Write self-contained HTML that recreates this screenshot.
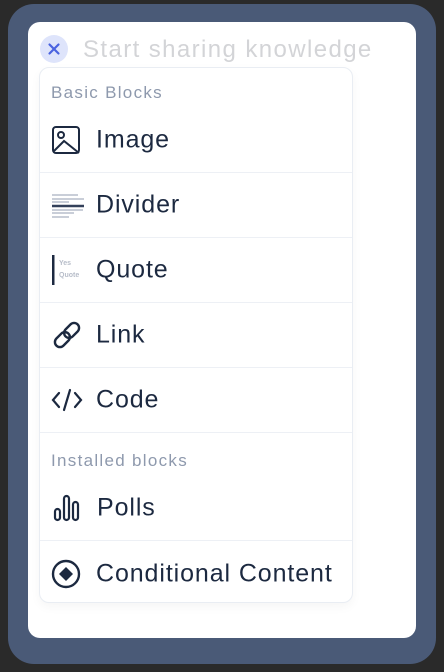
<!DOCTYPE html>
<html><head><style>
*{margin:0;padding:0;box-sizing:border-box}
html,body{width:444px;height:672px;overflow:hidden;background:#2a2a2a;font-family:"Liberation Sans",sans-serif}
.sh{position:absolute;left:8px;top:4px;width:428px;height:660px;border-radius:26px;background:#4a5a77}
.card{position:absolute;left:28px;top:22px;width:388px;height:616px;border-radius:12px;background:#fff}
.x{position:absolute;left:40px;top:35px;width:28px;height:28px;border-radius:50%;background:#dee4fb}
.ph{position:absolute;left:83px;top:36px;font-size:24px;letter-spacing:1.4px;color:#d3d4d7;white-space:nowrap}
.menu{position:absolute;left:39px;top:67px;width:314px;height:536px;border:1px solid #e9edf3;border-radius:10px;background:#fff;box-shadow:0 4px 10px rgba(0,0,0,0.04)}
.lbl{position:absolute;left:11px;font-size:17px;letter-spacing:1.3px;color:#8e99ad}
.row{position:absolute;left:0;width:312px;height:65px;border-bottom:1.5px solid #edf0f5}
.row span{position:absolute;left:56px;top:50%;transform:translateY(-50%);font-size:25px;letter-spacing:0.9px;color:#1c2940;white-space:nowrap}
.row svg{position:absolute;left:11px;top:50%;transform:translateY(-50%)}
</style></head><body>
<div class="sh"></div>
<div class="card"></div>
<div class="x"><svg width="28" height="28"><path d="M9.5 9.5l9 9M18.5 9.5l-9 9" stroke="#4a63e0" stroke-width="2.2" stroke-linecap="round"/></svg></div>
<div class="ph">Start sharing knowledge</div>
<div class="menu">
<div class="lbl" style="top:15px">Basic Blocks</div>
<div class="row" style="top:40px"><svg width="30" height="30"><rect x="2" y="2" width="26" height="26" rx="3" fill="none" stroke="#1c2940" stroke-width="2"/><circle cx="10" cy="10" r="3" fill="none" stroke="#1c2940" stroke-width="2"/><path d="M3 26l10-10 15 12" fill="none" stroke="#1c2940" stroke-width="2"/></svg><span>Image</span></div>
<div class="row" style="top:105px"><svg width="34" height="26"><g stroke="#c9ced8" stroke-width="2"><path d="M1 3h26M1 7h32M1 10h17M1 18h31M1 21h22M1 25h17"/></g><path d="M1 14h32" stroke="#33405a" stroke-width="2.5"/></svg><span>Divider</span></div>
<div class="row" style="top:170px"><svg width="34" height="32"><rect x="1" y="1" width="2.5" height="30" fill="#1c2940"/><text x="8" y="11" font-size="7" font-family="Liberation Sans" fill="#b7bdc9" font-weight="bold">Yes</text><text x="8" y="23" font-size="7" font-family="Liberation Sans" fill="#b7bdc9" font-weight="bold">Quote</text></svg><span>Quote</span></div>
<div class="row" style="top:235px"><svg width="32" height="28"><g fill="none" stroke="#1c2940" stroke-width="2.4" stroke-linecap="round" transform="rotate(-45 16 14)"><rect x="1" y="9" width="17" height="10" rx="5"/><rect x="14" y="9" width="17" height="10" rx="5"/></g></svg><span>Link</span></div>
<div class="row" style="top:300px"><svg width="32" height="24"><g fill="none" stroke="#1c2940" stroke-width="2.2" stroke-linecap="round"><path d="M8 5L2 12l6 7M24 5l6 7-6 7M19 2l-6 20"/></g></svg><span>Code</span></div>
<div class="lbl" style="top:383px">Installed blocks</div>
<div class="row" style="top:408px"><svg width="32" height="28"><g fill="none" stroke="#1c2940" stroke-width="2.2"><rect x="4" y="15" width="5" height="11" rx="2.5"/><rect x="13" y="2" width="5" height="24" rx="2.5"/><rect x="22" y="8" width="5" height="18" rx="2.5"/></g></svg><span style="left:57px">Polls</span></div>
<div class="row" style="top:473px;border-bottom:none"><svg width="30" height="30"><circle cx="15" cy="15" r="13" fill="none" stroke="#1c2940" stroke-width="2.4"/><path d="M15 8l7 7-7 7-7-7z" fill="#1c2940"/></svg><span>Conditional Content</span></div>
</div>
</body></html>
